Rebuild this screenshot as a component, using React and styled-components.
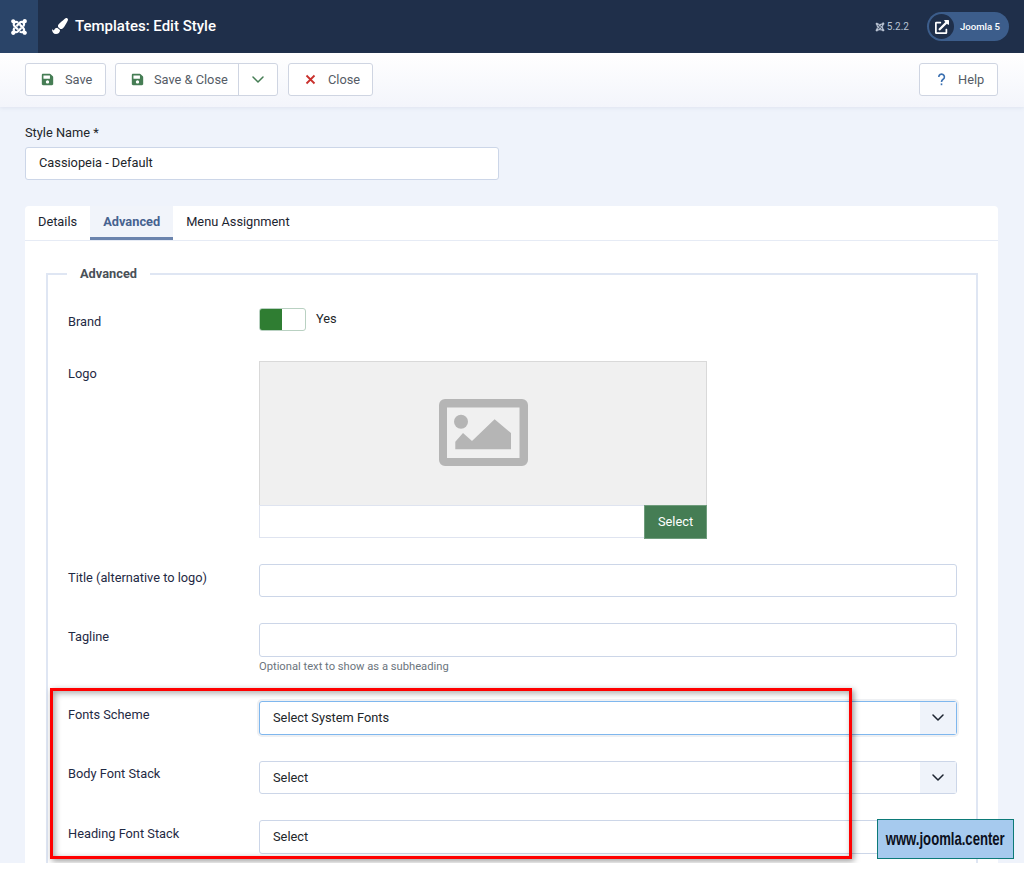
import React from 'react';
import styled, { createGlobalStyle } from 'styled-components';
import { FaJoomla, FaSave, FaPaintBrush, FaExternalLinkAlt } from 'react-icons/fa';

const Global = createGlobalStyle`
  html, body { margin: 0; padding: 0; background: #fff; }
  body { font-family: Roboto, "Liberation Sans", sans-serif; font-size: 12.8px; color: #22262a; }
  * { box-sizing: border-box; }
`;

const Page = styled.div`
  position: relative; height: 863px; overflow: hidden; background: #eff3fb; width: 1024px;
`;
const Header = styled.header`
  display: flex; align-items: center; height: 53px; background: #1f2f4a; color: #fff;
`;
const LogoBox = styled.div`
  width: 38px; height: 53px; background: #2a4468; display: flex; align-items: center; justify-content: center; font-size: 18px;
`;
const PageTitle = styled.h1`
  display: flex; align-items: center; gap: 7px; margin: 0 0 2px 14px; font-size: 15px; font-weight: 500; flex: 1;
  svg { font-size: 16px; }
`;
const Version = styled.span`
  display: flex; align-items: center; gap: 2px; font-size: 10px; color: #b9c3d3; margin-right: 18px;
`;
const UserPill = styled.div`
  display: flex; align-items: center; gap: 6px; height: 29px; width: 82px; margin-right: 15px; padding: 2px; background: #3c5d8b;
  border-radius: 15px; font-size: 9.6px; font-weight: 500;
`;
const PillIcon = styled.span`
  width: 25px; height: 25px; border-radius: 50%; background: #1f2f4a; display: flex; align-items: center; justify-content: center; font-size: 14px;
`;
const Toolbar = styled.div`
  display: flex; gap: 10px; align-items: flex-start; height: 54px; padding: 10px 26px 0 25px;
  background: linear-gradient(#fff, #f3f5fb); box-shadow: 0 1px 4px rgba(100,120,160,.12);
`;
const Button = styled.button`
  display: inline-flex; align-items: center; height: 33px; padding: 0 0 0 15px; background: #fff; border: 1px solid #cfd5e2; border-radius: 3px;
  font: 400 12.8px Roboto, sans-serif; color: #555c66; width: ${p => p.$w}px;
  ${p => p.$right && 'margin-left: auto;'}
  svg { margin-right: ${p => p.$gap ?? 11}px; color: ${p => p.$color}; flex: none; width: 13px; height: 13px; }
`;
const SplitGroup = styled.div`
  display: flex; height: 33px; width: 163px; margin-left: -1px; background: #fff; border: 1px solid #cfd5e2; border-radius: 3px; font-size: 12.8px; color: #555c66;
`;
const SplitMain = styled.span`
  display: flex; align-items: center; width: 123px; padding-left: 15px; border-right: 1px solid #cfd5e2;
  svg { margin-right: 10px; color: #457d54; font-size: 13px; }
`;
const SplitCaret = styled.span`
  flex: 1; display: flex; align-items: center; justify-content: center; color: #457d54;
`;
const Main = styled.main`
  padding: 18px 26px 0 25px;
`;
const NameLabel = styled.label`
  display: block; font-size: 12.8px; line-height: 16px; margin-bottom: 6px; color: #22262a;
`;
const TextInput = styled.div`
  height: ${p => p.$h || 33}px; width: ${p => p.$w ? p.$w + 'px' : '100%'}; background: #fff; border: 1px solid #ccd6e8; border-radius: 3px;
  display: flex; align-items: center; padding: 0 0 2px 13px; font-size: 12.8px; color: #22262a;
`;
const Card = styled.section`
  margin-top: 26px; background: #fff; border-radius: 4px 4px 0 0; height: 660px;
`;
const Tabs = styled.nav`
  display: flex; height: 35px; border-bottom: 1px solid #e6ebf5;
`;
const Tab = styled.span`
  display: flex; align-items: center; padding: 0 13px 4px; font-size: 12.8px; color: #1c2430; height: 34px;
  ${p => p.$active && 'background: #f1f4fa; color: #46628f; font-weight: 700; box-shadow: inset 0 -3px 0 #6b84ad;'}
`;
const Fieldset = styled.fieldset`
  margin: 25px 20px 0 21px; padding: 26px 19px 0 20px; border: 2px solid #dfe6f3; border-bottom: 0; min-width: 0;
`;
const Legend = styled.legend`
  margin-left: -1px; padding: 0 13px; font-size: 12.8px; font-weight: 700; color: #495057; line-height: 16px;
`;
const Row = styled.div`
  display: grid; grid-template-columns: 191px 1fr; margin-bottom: ${p => p.$mb ?? 26}px;
`;
const Label = styled.label`
  font-size: 12.8px; line-height: 18px; padding-top: ${p => p.$pt ?? 4.5}px; color: #1f2a44;
`;
const SwitchWrap = styled.div`
  display: flex; align-items: flex-start; gap: 10px; font-size: 12.8px; line-height: 18px; color: #22262a;
`;
const SwitchText = styled.span`
  padding-top: 2px;
`;
const Switch = styled.span`
  display: block; width: 47px; height: 23px; border: 1px solid #b9d1c2; border-radius: 3px;
  background: linear-gradient(90deg, #2f7d32 50%, #fff 50%);
`;
const Preview = styled.div`
  width: 448px; height: 144px; padding-bottom: 2px; background: #f0f0f0; border: 1px solid #d9d9d9; border-bottom: 0; display: flex; align-items: center; justify-content: center;
`;
const MediaBar = styled.div`
  display: flex; width: 448px; height: 33px; background: #fff; border: 1px solid #dfe4f0; border-right: 0;
`;
const SelectButton = styled.span`
  margin-left: auto; width: 63px; margin-top: -1px; height: 34px; padding-bottom: 2px; background: #457d54; border: 1px solid #6f9c7c; color: #fff;
  display: flex; align-items: center; justify-content: center; font-size: 12.8px; font-weight: 400;
`;
const Help = styled.small`
  display: block; margin-top: 3px; font-size: 11.2px; line-height: 14px; color: #6c757d;
`;
const Select = styled.div`
  position: relative; display: flex; align-items: center; height: 33.5px; background: #fff; border: 1px solid ${p => p.$focus ? '#7fb7ee' : '#ccd6e8'};
  border-radius: 3px; padding-left: 13px; font-size: 12.8px; color: #22262a;
  ${p => p.$focus && 'box-shadow: 0 0 0 2px #eef0f3;'}
`;
const SelectCaret = styled.span`
  margin-left: auto; width: 36px; align-self: stretch; background: #eff3fa; display: flex; align-items: center; justify-content: center; color: #1c2430;
`;
const RedBox = styled.div`
  position: absolute; left: 50px; top: 688px; width: 802px; height: 171px; border: 3px solid #f00;
  box-shadow: 2px 2px 6px rgba(0,0,0,.4), inset 2px 2px 6px rgba(0,0,0,.35); pointer-events: none;
`;
const Watermark = styled.div`
  position: absolute; left: 877px; top: 819px; width: 137px; height: 40px; background: #a6caee; border: 1px solid #0c7a78;
  display: flex; align-items: center; justify-content: center; color: #0b1020;
`;
const WatermarkText = styled.span`
  display: block; white-space: nowrap; font: 700 19px "Liberation Sans", sans-serif; transform: scaleX(0.69);
`;

const Chevron = () => (
  <svg width="12" height="7" viewBox="0 0 12 7" fill="none" stroke="currentColor" strokeWidth="1.5" strokeLinecap="round" strokeLinejoin="round">
    <path d="M1 1l5 5 5-5" />
  </svg>
);
const CloseIcon = () => (
  <svg viewBox="0 0 13 13" fill="none" stroke="currentColor" strokeWidth="1.8">
    <path d="M2.500 2.500l8 8M10.500 2.500l-8 8" />
  </svg>
);
const QuestionIcon = () => (
  <svg viewBox="0 0 13 13" fill="none" stroke="currentColor" strokeWidth="1.6">
    <path d="M3.800 4a2.800 2.800 0 1 1 4.300 2.300C7 7 6.500 7.500 6.500 9" />
    <path d="M6.500 10.400v1.800" />
  </svg>
);

const PlaceholderIcon = () => (
  <svg width="89" height="67" viewBox="0 0 89 67" fill="#b5b5b5">
    <path fillRule="evenodd" d="M6 0h77a6 6 0 0 1 6 6v55a6 6 0 0 1-6 6H6a6 6 0 0 1-6-6V6a6 6 0 0 1 6-6zm2 8.500V59h72.500V8.500z" />
    <circle cx="22" cy="22.700" r="7" />
    <path d="M16.300 50.300V42.700L24 34l9 8 22.600-21.700L72 34v16.300z" />
  </svg>
);

export default function App() {
  return (
    <Page>
      <Global />
      <Header>
        <LogoBox><FaJoomla /></LogoBox>
        <PageTitle><FaPaintBrush />Templates: Edit Style</PageTitle>
        <Version><FaJoomla />5.2.2</Version>
        <UserPill><PillIcon><FaExternalLinkAlt /></PillIcon>Joomla 5</UserPill>
      </Header>
      <Toolbar>
        <Button $w={81} $color="#457d54"><FaSave />Save</Button>
        <SplitGroup>
          <SplitMain><FaSave />Save &amp; Close</SplitMain>
          <SplitCaret><Chevron /></SplitCaret>
        </SplitGroup>
        <Button $w={85} $color="#c9302c"><CloseIcon />Close</Button>
        <Button $w={79} $right $gap={10} $color="#3a6fb0"><QuestionIcon />Help</Button>
      </Toolbar>
      <Main>
        <NameLabel>Style Name *</NameLabel>
        <TextInput $w={474}>Cassiopeia - Default</TextInput>
        <Card>
          <Tabs>
            <Tab>Details</Tab>
            <Tab $active>Advanced</Tab>
            <Tab>Menu Assignment</Tab>
          </Tabs>
          <Fieldset>
            <Legend>Advanced</Legend>
            <Row $mb={30}>
              <Label>Brand</Label>
              <SwitchWrap><Switch /><SwitchText>Yes</SwitchText></SwitchWrap>
            </Row>
            <Row>
              <Label $pt={3.5}>Logo</Label>
              <div>
                <Preview><PlaceholderIcon /></Preview>
                <MediaBar><SelectButton>Select</SelectButton></MediaBar>
              </div>
            </Row>
            <Row>
              <Label>Title (alternative to logo)</Label>
              <TextInput $h={33} />
            </Row>
            <Row $mb={27}>
              <Label>Tagline</Label>
              <div>
                <TextInput $h={34} />
                <Help>Optional text to show as a subheading</Help>
              </div>
            </Row>
            <Row>
              <Label>Fonts Scheme</Label>
              <Select $focus>Select System Fonts<SelectCaret><Chevron /></SelectCaret></Select>
            </Row>
            <Row>
              <Label>Body Font Stack</Label>
              <Select>Select<SelectCaret><Chevron /></SelectCaret></Select>
            </Row>
            <Row>
              <Label>Heading Font Stack</Label>
              <Select>Select<SelectCaret><Chevron /></SelectCaret></Select>
            </Row>
          </Fieldset>
        </Card>
      </Main>
      <RedBox />
      <Watermark><WatermarkText>www.joomla.center</WatermarkText></Watermark>
    </Page>
  );
}
